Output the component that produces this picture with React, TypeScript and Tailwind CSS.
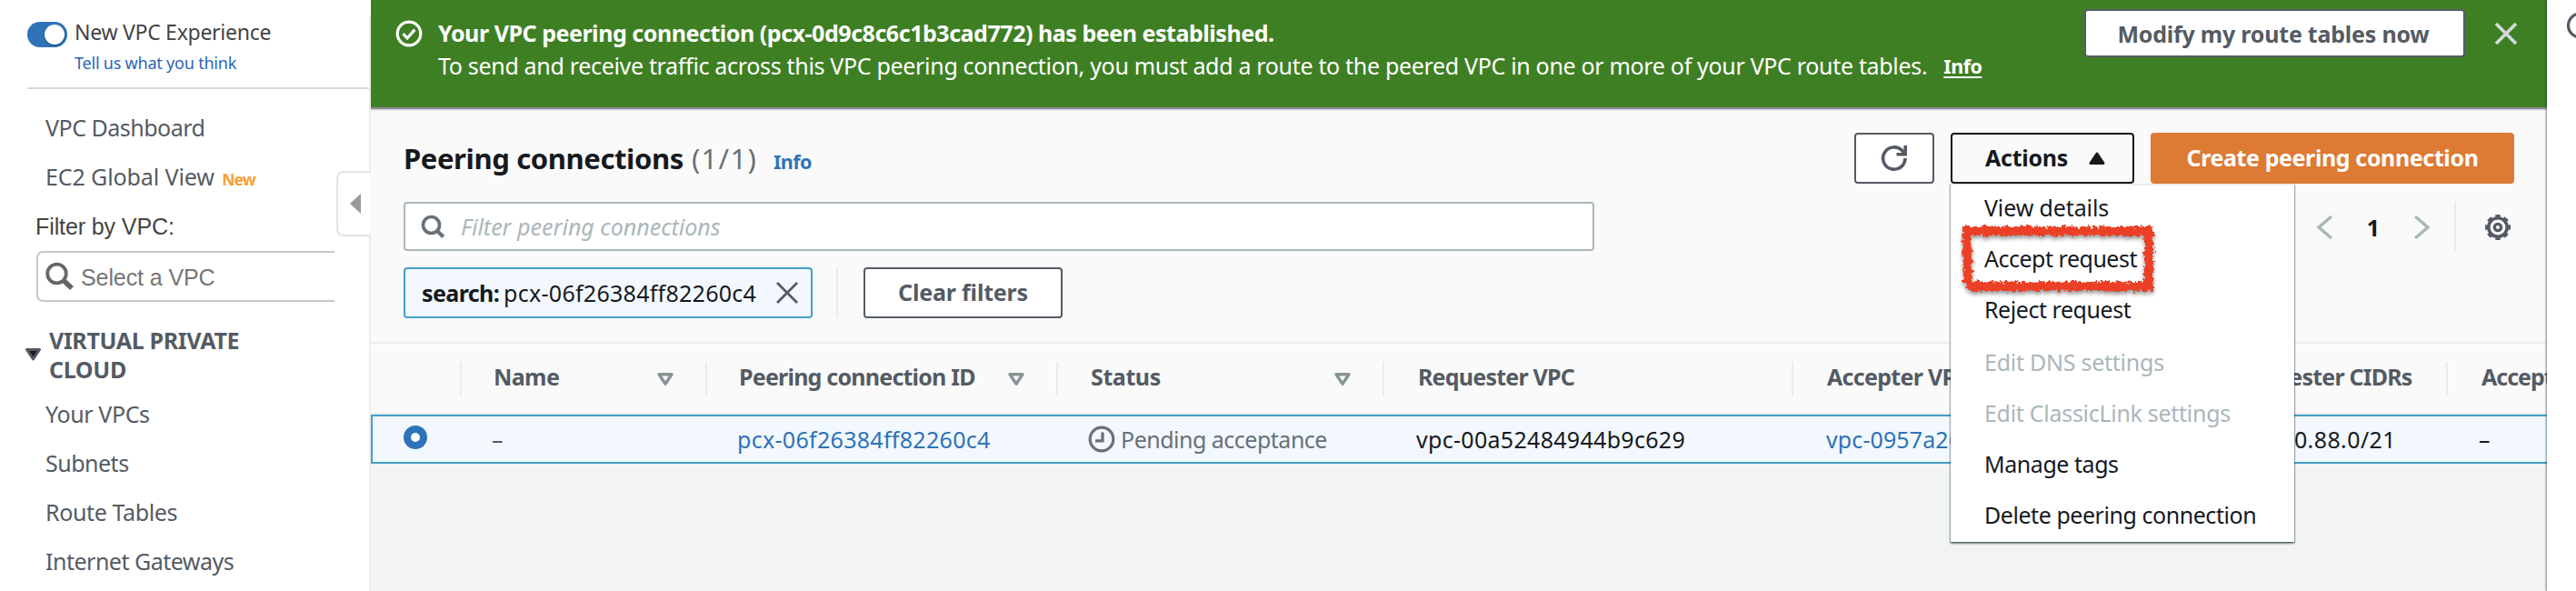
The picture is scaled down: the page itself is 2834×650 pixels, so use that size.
import type { ReactNode } from "react";

function SortIcon() {
  return (
    <svg className="h-[16px] w-[20px] shrink-0" viewBox="0 0 20 16" fill="none" stroke="#879596" strokeWidth="3.4" strokeLinejoin="round">
      <path d="M3 2.7h14L10 13.2z" />
    </svg>
  );
}

function CloseIcon({ color, width }: { color: string; width: number }) {
  return (
    <svg className="h-[26px] w-[26px] shrink-0" viewBox="0 0 26 26" fill="none" stroke={color} strokeWidth={width}>
      <path d="M2 2l22 22M24 2L2 24" />
    </svg>
  );
}

function Sidebar() {
  const item = "block h-[54px] pl-[50px] text-[25px] leading-[54px] text-[#545b64]";
  return (
    <aside className="relative flex h-[650px] w-[408px] shrink-0 flex-col bg-white">
      <div className="ml-[30px] flex h-[98px] border-b-2 border-[#d8d9d9] pt-[21px]">
        <div className="mt-[3px] flex h-7 w-11 items-center justify-end rounded-full bg-[#2e73b8] pr-[3px]">
          <div className="size-[22px] rounded-full bg-white shadow-[0_1px_2px_rgba(0,0,0,0.4)]" />
        </div>
        <div className="ml-[8px] flex flex-col">
          <span className="text-[23px] leading-[28px] tracking-[-0.27px] text-[#444]">New VPC Experience</span>
          <span className="mt-[8px] text-[18px] leading-[24px] tracking-[-0.21px] text-[#2b65b8]">Tell us what you think</span>
        </div>
      </div>
      <nav className="mt-[15px] flex flex-col whitespace-nowrap">
        <a className={item + " tracking-[-0.5px]"}>VPC Dashboard</a>
        <a className={item + " tracking-[-0.1px]"}>
          EC2 Global View <b className="ml-[2px] text-[17.5px] tracking-[-0.9px] text-[#f7a033]">New</b>
        </a>
      </nav>
      <div className="h-[55px] pl-[39px] pt-px font-['Liberation_Sans',sans-serif] text-[25px] leading-[55px] tracking-[-0.1px] text-[#444]">
        Filter by VPC:
      </div>
      <div className="ml-[40px] flex h-14 w-[328px] items-center rounded-l-[7px] border-2 border-r-0 border-[#c8c8c8] pl-2">
        <svg className="size-8 shrink-0" viewBox="0 0 32 32" fill="none" stroke="#666">
          <circle cx="12.5" cy="13" r="10.3" strokeWidth="3.8" />
          <path d="M20 20.500l9 8.500" strokeWidth="5.500" />
        </svg>
        <span className="ml-[7px] pt-[2px] font-['Liberation_Sans',sans-serif] text-[25px] leading-[50px] tracking-[-0.1px] text-[#757575]">Select a VPC</span>
      </div>
      <div className="mt-[26px] flex pl-[27px]">
        <svg className="mt-[24px] h-[16px] w-[19px] shrink-0" viewBox="0 0 19 16">
          <path d="M2.500 2.500h14L9.500 13z" fill="#16191f" stroke="#545b64" strokeWidth="3" strokeLinejoin="round" />
        </svg>
        <div className="ml-[8px] w-[230px] text-[25px] font-bold leading-8 tracking-[-0.33px] text-[#545b64]">VIRTUAL PRIVATE CLOUD</div>
      </div>
      <nav className="mt-[6px] flex flex-col whitespace-nowrap">
        <a className={item + " tracking-[-0.4px]"}>Your VPCs</a>
        <a className={item + " tracking-[-0.5px]"}>Subnets</a>
        <a className={item + " tracking-[-0.38px]"}>Route Tables</a>
        <a className={item + " tracking-[-0.5px]"}>Internet Gateways</a>
      </nav>
      <div className="absolute right-0 top-[18px] h-[632px] w-[2px] bg-[#ececec]" />
      <div className="absolute right-0 top-[188px] flex h-[72px] w-[38px] items-center rounded-l-[8px] border-2 border-r-0 border-[#e3e3e3] bg-white pl-[13px]">
        <svg className="h-[22px] w-[12px]" viewBox="0 0 12 22" fill="#999">
          <path d="M12 0v22L0 11z" />
        </svg>
      </div>
    </aside>
  );
}

function Banner() {
  return (
    <div className="relative z-10 flex h-[118px] shrink-0 bg-[#3f7f24] shadow-[0_2px_1px_rgba(70,75,95,0.6),0_4px_1px_rgba(0,0,0,0.07)]">
      <svg className="ml-[27px] mt-[22px] size-[30px] shrink-0" viewBox="0 0 30 30" fill="none" stroke="#fff" strokeWidth="3.200">
        <circle cx="15" cy="15" r="12.800" />
        <path d="M8.500 15.200l4.600 4.800L21.300 10.600" />
      </svg>
      <div className="ml-[17px] pt-[18px] text-[25px] leading-9 whitespace-nowrap text-white">
        <div className="font-bold tracking-[-0.46px]">Your VPC peering connection (pcx-0d9c8c6c1b3cad772) has been established.</div>
        <div className="flex">
          <span className="tracking-[-0.32px]">
            To send and receive traffic across this VPC peering connection, you must add a route to the peered VPC in one or more of your VPC route tables.
          </span>
          <b className="ml-[18px] pt-px text-[21.500px] tracking-[-0.5px] underline decoration-2 underline-offset-[3px]">Info</b>
        </div>
      </div>
      <button className="ml-auto mt-[10px] h-[53px] w-[419px] rounded-[4px] border-2 border-[#545b64] bg-white pr-[3px] text-[25px] font-bold leading-[48px] tracking-[-0.22px] text-[#545b64]">
        Modify my route tables now
      </button>
      <div className="ml-[32px] mr-[32px] mt-[24px]">
        <CloseIcon color="#d5dbdb" width={3.6} />
      </div>
    </div>
  );
}

function ActionsMenu() {
  const row = "h-14 pl-[37px] text-[25px] leading-[52px] whitespace-nowrap";
  return (
    <div className="absolute left-0 top-14 h-[394px] w-[378px] border-t-2 border-[#eaeded] bg-white shadow-[0_2px_2px_rgba(0,28,36,0.45),1px_1px_1px_rgba(0,28,36,0.25),-1px_1px_1px_rgba(0,28,36,0.25)]">
      <div className="-mt-[2px] flex flex-col text-[#16191f]">
        <div className={row + " tracking-[-0.13px]"}>View details</div>
        <div className={row + " tracking-[-0.49px]"}>Accept request</div>
        <div className={row + " tracking-[-0.45px]"}>Reject request</div>
        <div className={row + " mt-[2px] tracking-[-0.25px] text-[#aab7b8]"}>Edit DNS settings</div>
        <div className={row + " tracking-[-0.29px] text-[#aab7b8]"}>Edit ClassicLink settings</div>
        <div className={row + " tracking-[-0.45px]"}>Manage tags</div>
        <div className={row + " tracking-[-0.45px]"}>Delete peering connection</div>
      </div>
      <svg className="absolute left-[4px] top-[36px] h-[94px] w-[230px]" viewBox="0 0 230 94" fill="none">
        <defs>
          <filter id="crayon" x="-10%" y="-20%" width="120%" height="140%">
            <feTurbulence type="fractalNoise" baseFrequency="0.28" numOctaves="3" seed="7" result="noise" />
            <feDisplacementMap in="SourceGraphic" in2="noise" scale="9" xChannelSelector="R" yChannelSelector="G" result="rough" />
            <feDropShadow in="rough" dx="0" dy="3" stdDeviation="2" floodColor="#000" floodOpacity="0.4" />
          </filter>
        </defs>
        <path filter="url(#crayon)" d="M14 14H214V75H19L15 69z" stroke="#ec4127" strokeWidth="10" />
      </svg>
    </div>
  );
}

function TitleBar() {
  return (
    <div className="flex h-14 items-start">
      <h1 className="flex items-baseline text-[31px] leading-[56px] whitespace-nowrap">
        <b className="tracking-[-0.38px] text-[#16191f]">Peering connections</b>
        <span className="ml-[9px] tracking-[1.3px] text-[#687078]">(1/1)</span>
        <b className="ml-[18px] text-[21.500px] tracking-[-0.6px] text-[#2e73b8]">Info</b>
      </h1>
      <div className="ml-auto flex gap-[18px]">
        <button className="flex h-14 w-[88px] items-center justify-center rounded-[4px] border-2 border-[#545b64] bg-white">
          <svg className="size-[32px]" viewBox="0 0 32 32" fill="none" stroke="#545b64" strokeWidth="3.600">
            <path d="M28 16A12.200 12.200 0 1 1 24.600 7.600L27 10" />
            <path d="M28.200 2v9.800H18.500" />
          </svg>
        </button>
        <div className="relative z-20">
          <button className="flex h-14 w-[202px] items-center rounded-[4px] border-2 border-[#16191f] bg-[#fafafa] pl-[36px] text-[25px] font-bold leading-[50px] tracking-[-0.28px] text-[#16191f]">
            <span className="pb-[2px]">Actions</span>
            <svg className="ml-[22px] h-[16px] w-[20px]" viewBox="0 0 20 16">
              <path d="M3 13.500h14L10 3z" fill="#16191f" stroke="#16191f" strokeWidth="3" strokeLinejoin="round" />
            </svg>
          </button>
          <ActionsMenu />
        </div>
        <button className="h-14 w-[400px] rounded-[4px] bg-[#dd7a33] pb-[2px] text-[25px] font-bold leading-[54px] tracking-[-0.39px] text-white">Create peering connection</button>
      </div>
    </div>
  );
}

function FilterBar() {
  return (
    <div className="mt-5 flex h-14 items-start">
      <div className="flex h-[54px] w-[1310px] items-center rounded-[4px] border-2 border-[#aab7b8] bg-white pl-[16px]">
        <svg className="size-[28px]" viewBox="0 0 28 28" fill="none" stroke="#687078" strokeWidth="3.600">
          <circle cx="12.500" cy="12.500" r="9" />
          <path d="M18.800 18.800l7 6.800" strokeWidth="4.200" />
        </svg>
        <span className="ml-[17px] text-[25px] leading-[50px] italic text-[#aab7b8]">Filter peering connections</span>
      </div>
      <div className="ml-auto flex h-14 items-center">
        <svg className="h-[28px] w-[20px]" viewBox="0 0 20 28" fill="none" stroke="#aab7b8" strokeWidth="3.400">
          <path d="M18 2L4 14l14 12" />
        </svg>
        <b className="w-[88px] pb-px text-center text-[25px] leading-[54px] text-[#16191f]">1</b>
        <svg className="h-[28px] w-[20px]" viewBox="0 0 20 28" fill="none" stroke="#aab7b8" strokeWidth="3.400">
          <path d="M2 2l14 12L2 26" />
        </svg>
        <div className="ml-[25px] h-14 w-[2px] bg-[#eaeded]" />
        <svg className="ml-[31px] mr-[3px] size-[30px]" viewBox="0 0 30 30" fill="none" stroke="#545b64">
          <circle cx="15" cy="15" r="10.200" strokeWidth="3.600" />
          <circle cx="15" cy="15" r="12.600" strokeWidth="2.800" pathLength="80" strokeDasharray="5.500 4.500" strokeDashoffset="2.750" />
          <circle cx="15" cy="15" r="3.700" strokeWidth="3.200" />
        </svg>
      </div>
    </div>
  );
}

function TokenBar() {
  return (
    <div className="mt-4 flex h-14">
      <div className="flex w-[450px] items-center rounded-[4px] border-2 border-[#449fc8] bg-[#f2f8fd] pl-[18px] text-[25px] leading-[50px] whitespace-nowrap text-[#16191f]">
        <b className="tracking-[-0.6px]">search:</b>
        <span className="ml-[5px] tracking-[0.27px]">pcx-06f26384ff82260c4</span>
        <span className="ml-auto mr-[13px]">
          <CloseIcon color="#545b64" width={2.8} />
        </span>
      </div>
      <div className="ml-[26px] w-[2px] bg-[#eaeded]" />
      <button className="ml-[28px] w-[219px] rounded-[4px] border-2 border-[#545b64] bg-white pb-[2px] text-[25px] font-bold leading-[50px] tracking-[-0.17px] text-[#545b64]">Clear filters</button>
    </div>
  );
}

const columns = "grid grid-cols-[100px_270px_386px_359px_450px_446px_274px_300px]";

function HeadCell({ children, sort, last }: { children?: ReactNode; sort?: boolean; last?: boolean }) {
  return (
    <div className={"flex h-[38px] items-center justify-between pl-[35px] pr-[34px] text-[25px] font-bold leading-[33px] text-[#545b64] " + (last ? "" : "border-r-2 border-[#eaeded]")}>
      <span className="pb-[5px]">{children}</span>
      {sort && <SortIcon />}
    </div>
  );
}

function Table() {
  const cell = "pl-[33px] leading-[50px]";
  return (
    <div className="mt-[26px] w-full overflow-hidden border-t-2 border-[#eaeded] whitespace-nowrap">
      <div className={columns + " h-[78px] border-b-2 border-[#eaeded] pt-[20px]"}>
        <HeadCell />
        <HeadCell sort><span className="tracking-[-0.6px]">Name</span></HeadCell>
        <HeadCell sort><span className="tracking-[-0.78px]">Peering connection ID</span></HeadCell>
        <HeadCell sort><span className="pl-px tracking-[-0.4px]">Status</span></HeadCell>
        <HeadCell><span className="pl-[2px] tracking-[-0.78px]">Requester VPC</span></HeadCell>
        <HeadCell><span className="pl-[2px] tracking-[-0.7px]">Accepter VPC</span></HeadCell>
        <HeadCell><span className="pl-[4px] tracking-[-0.78px]">Requester CIDRs</span></HeadCell>
        <HeadCell last><span className="pl-[2px] tracking-[-1px]">Accepter CIDRs</span></HeadCell>
      </div>
      <div className="h-[54px] border-y-2 border-l-2 border-[#449fc8] bg-[#f2f8fd]">
        <div className={columns + " -ml-[2px] h-[50px] text-[25px] text-[#16191f]"}>
          <div className="flex items-center pl-[36px]">
            <div className="mb-[4px] flex size-[26px] items-center justify-center rounded-full bg-[#2e73b8]">
              <div className="size-[10px] rounded-full bg-white" />
            </div>
          </div>
          <div className={cell + " text-[#545b64]"}>–</div>
          <div className={cell + " tracking-[0.3px] text-[#2e73b8]"}>pcx-06f26384ff82260c4</div>
          <div className="flex items-center pl-[33px] leading-[50px] text-[#687078]">
            <svg className="size-[30px]" viewBox="0 0 30 30" fill="none" stroke="#687078" strokeWidth="3.200">
              <circle cx="15" cy="15" r="12.800" />
              <path d="M16 7.500v9.300H8" />
            </svg>
            <span className="ml-[6px] tracking-[-0.5px]">Pending acceptance</span>
          </div>
          <div className="pl-[35px] leading-[50px] tracking-[0.3px]">vpc-00a52484944b9c629</div>
          <div className="pl-[36px] leading-[50px] tracking-[0.1px] text-[#2e73b8]">vpc-0957a26</div>
          <div className="pr-[57px] text-right leading-[50px] tracking-[0.4px]">10.20.88.0/21</div>
          <div className="pl-[34px] leading-[50px]">–</div>
        </div>
      </div>
    </div>
  );
}

export default function App() {
  return (
    <div className="flex h-[650px] w-[2834px] overflow-hidden bg-white font-['Noto_Sans',sans-serif]">
      <Sidebar />
      <main className="flex h-[650px] w-[2394px] shrink-0 flex-col overflow-hidden bg-[#f2f3f3]">
        <Banner />
        <section className="bg-[#fafafa] pt-7">
          <div className="px-9">
            <TitleBar />
            <FilterBar />
            <TokenBar />
          </div>
          <Table />
        </section>
      </main>
      <aside className="z-30 flex h-[650px] w-8 shrink-0 overflow-hidden bg-white shadow-[-1px_0_2px_rgba(0,28,36,0.5)]">
        <svg className="ml-[20px] mt-[12px] h-8 w-8 shrink-0" viewBox="0 0 32 32" fill="none" stroke="#545b64" strokeWidth="3.200">
          <circle cx="16.500" cy="16" r="13" />
        </svg>
      </aside>
    </div>
  );
}
